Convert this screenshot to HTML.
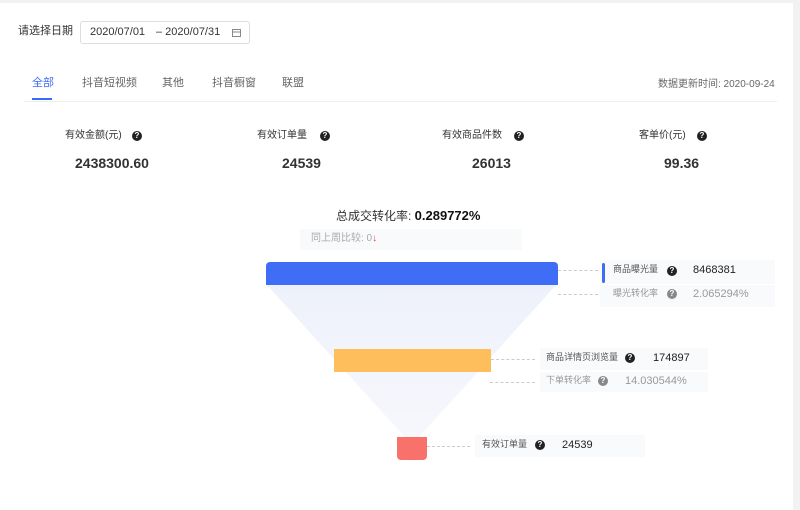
<!DOCTYPE html>
<html><head><meta charset="utf-8"><style>
*{margin:0;padding:0;box-sizing:border-box}
body{width:800px;height:510px;background:#fff;position:relative;overflow:hidden;font-family:"Liberation Sans","Noto Sans CJK SC",sans-serif;color:#333;line-height:1.2}
.a{position:absolute;white-space:nowrap}
.q{position:absolute;width:10px;height:10px;border-radius:50%;background:#222;color:#fff;font-size:8px;line-height:10px;text-align:center;font-weight:bold}
.qg{background:#888}
.dash{position:absolute;border-top:1px dashed #ccc;height:0}
.box{position:absolute;background:#f9fafc}
</style></head><body>
<div class="a" style="left:0;top:0;width:800px;height:3px;background:#f2f2f2"></div>
<div class="a" style="left:793px;top:0;width:7px;height:510px;background:#f2f2f2"></div>
<div class="a" style="left:18px;top:25px;font-size:11px;color:#333">请选择日期</div>
<div class="a" style="left:80px;top:21px;width:170px;height:23px;border:1px solid #ddd;border-radius:3px"></div>
<div class="a" style="left:90px;top:26px;font-size:11px;color:#333">2020/07/01</div>
<div class="a" style="left:156px;top:26px;font-size:11px;color:#333">– 2020/07/31</div>
<svg class="a" style="left:232px;top:28px" width="9" height="9" viewBox="0 0 9 9"><rect x="0.5" y="1.5" width="8" height="7" fill="none" stroke="#888"/><line x1="0.5" y1="4" x2="8.5" y2="4" stroke="#888"/></svg>
<div class="a" style="left:32px;top:77px;font-size:11px;color:#3b6cf6">全部</div>
<div class="a" style="left:32px;top:98px;width:20px;height:2px;background:#3b6cf6"></div>
<div class="a" style="left:82px;top:77px;font-size:11px;color:#666">抖音短视频</div>
<div class="a" style="left:162px;top:77px;font-size:11px;color:#666">其他</div>
<div class="a" style="left:212px;top:77px;font-size:11px;color:#666">抖音橱窗</div>
<div class="a" style="left:282px;top:77px;font-size:11px;color:#666">联盟</div>
<div class="a" style="left:658px;top:79px;font-size:10px;color:#666">数据更新时间: 2020-09-24</div>
<div class="a" style="left:24px;top:101px;width:753px;height:1px;background:#eee"></div>

<div class="a" style="left:65px;top:130px;font-size:10px">有效金额(元)</div><div class="q" style="left:132px;top:131px">?</div>
<div class="a" style="left:75px;top:155px;font-size:14px;font-weight:bold">2438300.60</div>
<div class="a" style="left:257px;top:130px;font-size:10px">有效订单量</div><div class="q" style="left:320px;top:131px">?</div>
<div class="a" style="left:282px;top:155px;font-size:14px;font-weight:bold">24539</div>
<div class="a" style="left:442px;top:130px;font-size:10px">有效商品件数</div><div class="q" style="left:514px;top:131px">?</div>
<div class="a" style="left:472px;top:155px;font-size:14px;font-weight:bold">26013</div>
<div class="a" style="left:639px;top:130px;font-size:10px">客单价(元)</div><div class="q" style="left:697px;top:131px">?</div>
<div class="a" style="left:664px;top:155px;font-size:14px;font-weight:bold">99.36</div>

<div class="a" style="left:336px;top:208px;font-size:12px">总成交转化率: <b style="font-size:13px;color:#111">0.289772%</b></div>
<div class="a" style="left:300px;top:229px;width:222px;height:21px;background:#f9fafc"></div>
<div class="a" style="left:311px;top:233px;font-size:10px;color:#aaa">同上周比较: 0<span style="color:#e44;font-weight:bold">↓</span></div>

<svg class="a" style="left:0;top:0" width="800" height="510"><defs><linearGradient id="g" x1="0" y1="0" x2="0" y2="1"><stop offset="0" stop-color="#eef1fb"/><stop offset="1" stop-color="#f7f8fd"/></linearGradient></defs>
<polygon points="266,284 557,284 412,445" fill="url(#g)"/></svg>
<div class="a" style="left:266px;top:262px;width:292px;height:23px;background:#3f6df5;border-radius:4px 4px 0 0"></div>
<div class="a" style="left:334px;top:349px;width:157px;height:23px;background:#ffbe5c"></div>
<div class="a" style="left:397px;top:437px;width:30px;height:23px;background:#f8716a;border-radius:0 0 4px 4px"></div>

<div class="box" style="left:600px;top:260px;width:175px;height:24px"></div>
<div class="box" style="left:600px;top:285px;width:175px;height:22px"></div>
<div class="dash" style="left:558px;top:270px;width:40px"></div>
<div class="a" style="left:602px;top:263px;width:3px;height:20px;background:#3f6df5;border-radius:2px"></div>
<div class="a" style="left:613px;top:264px;font-size:9px;color:#555">商品曝光量</div><div class="q" style="left:667px;top:266px">?</div>
<div class="a" style="left:693px;top:264px;font-size:11px;color:#222">8468381</div>
<div class="dash" style="left:558px;top:294px;width:40px"></div>
<div class="a" style="left:613px;top:288px;font-size:9px;color:#999">曝光转化率</div><div class="q qg" style="left:667px;top:289px">?</div>
<div class="a" style="left:693px;top:288px;font-size:11px;color:#999">2.065294%</div>

<div class="box" style="left:540px;top:348px;width:168px;height:22px"></div>
<div class="box" style="left:540px;top:372px;width:168px;height:20px"></div>
<div class="dash" style="left:491px;top:359px;width:44px"></div>
<div class="a" style="left:546px;top:352px;font-size:9px;color:#555">商品详情页浏览量</div><div class="q" style="left:625px;top:353px">?</div>
<div class="a" style="left:653px;top:352px;font-size:11px;color:#222">174897</div>
<div class="dash" style="left:490px;top:382px;width:45px"></div>
<div class="a" style="left:546px;top:375px;font-size:9px;color:#999">下单转化率</div><div class="q qg" style="left:598px;top:376px">?</div>
<div class="a" style="left:625px;top:375px;font-size:11px;color:#999">14.030544%</div>

<div class="box" style="left:475px;top:435px;width:170px;height:22px"></div>
<div class="dash" style="left:427px;top:446px;width:43px"></div>
<div class="a" style="left:482px;top:439px;font-size:9px;color:#555">有效订单量</div><div class="q" style="left:535px;top:440px">?</div>
<div class="a" style="left:562px;top:439px;font-size:11px;color:#222">24539</div>
</body></html>
